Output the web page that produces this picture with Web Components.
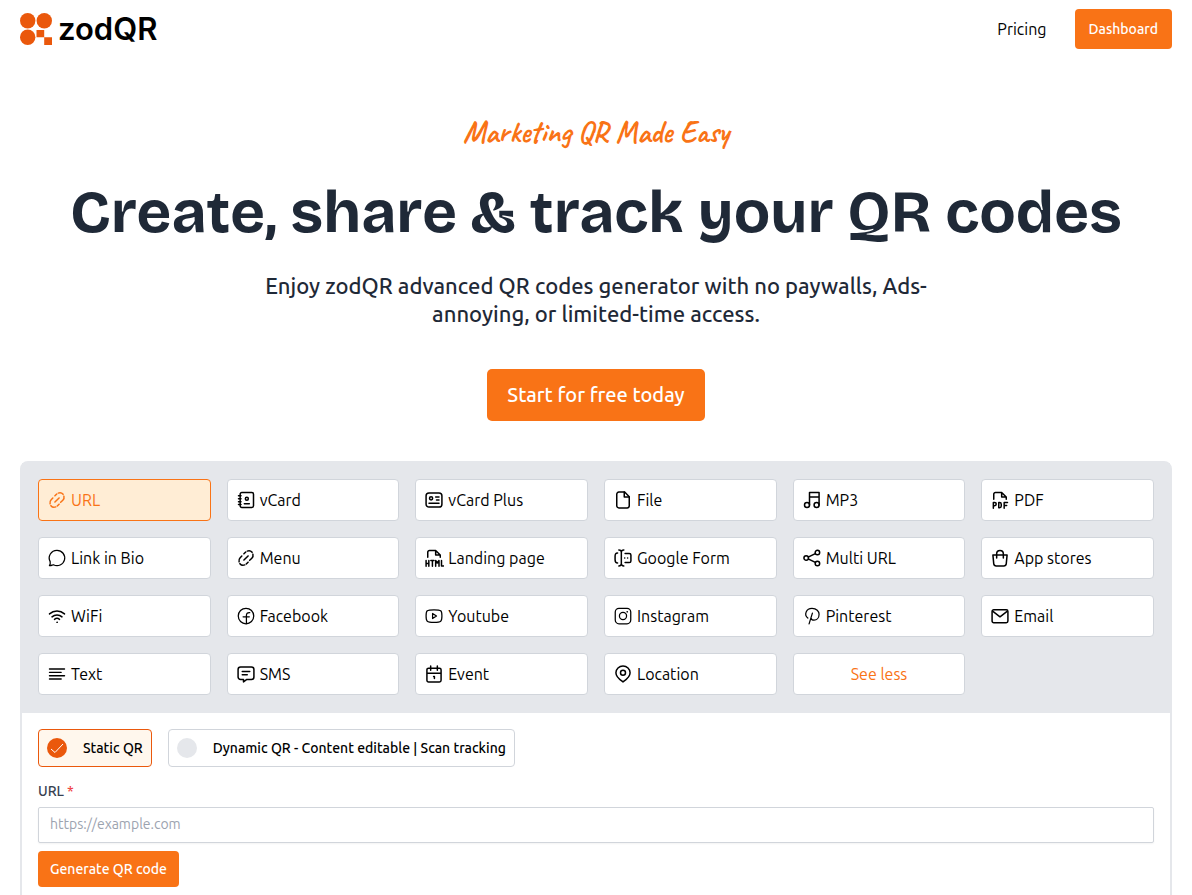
<!DOCTYPE html>
<html lang="en">
<head>
<meta charset="utf-8">
<meta name="viewport" content="width=device-width, initial-scale=1">
<title>zodQR - Marketing QR Made Easy</title>
<style>
  :root {
    --brand: #f97316;
    --brand-dark: #ea580c;
    --panel: #e5e7eb;
    --line: #d1d5db;
    --ink: #1f2937;
  }
  body {
    margin: 0;
    background: #fff;
    color: #000;
    font-family: Ubuntu, "Noto Sans", sans-serif;
    font-size: 16px;
    line-height: 24px;
  }
</style>
</head>
<body>
<site-header></site-header>
<main>
  <hero-section>
    <span slot="tagline">Marketing QR Made Easy</span>
    Create, share &amp; track your QR codes
    <span slot="lead">Enjoy zodQR advanced QR codes generator with no paywalls, Ads-annoying, or limited-time access.</span>
    <span slot="cta">Start for free today</span>
  </hero-section>
  <qr-generator></qr-generator>
</main>

<script>
const base = `
  * {
    margin: 0;
    padding: 0;
    box-sizing: border-box;
  }
  button, input {
    font: inherit;
  }
`

// all icons are drawn on a 24x24 grid
const icons = {
  link: `<path d="M9.500 7l2.200-2.200M13.500 3.700a5 5 0 0 1 5.800 1.500M20.300 7.500a5 5 0 0 1-1.300 4.800l-2.600 2.500M14.500 17l-2.200 2.200M10.500 20.300a5 5 0 0 1-5.800-1.500M3.700 16.500a5 5 0 0 1 1.300-4.800l2-2M9.500 14.500l5-5"/>`,
  chat: `<path stroke-width="1.5" d="M12 2.8a9.2 9.2 0 1 1-4.3 17.3c-1.2.1-2.7 1.3-4.8 1c1.1-1.4 1.2-3.2.9-4.7A9.2 9.2 0 0 1 12 2.8z"/>`,
  vcard: `<rect x="5" y="3" width="16" height="18" rx="2"/><path d="M3 7h3M3 10.500h3M3 14h3M3 17.500h3M10 16.500h6"/><circle cx="13" cy="10.500" r="1.800"/>`,
  vcardPlus: `<rect x="2.5" y="3.5" width="19" height="17" rx="3.5"/><circle cx="8.5" cy="10" r="1.9"/><path d="M14 8.5h4M15 12h3M6 16h12"/>`,
  file: `<path d="M14 2.5H7a2.5 2.5 0 0 0-2.5 2.5v14A2.5 2.5 0 0 0 7 21.500h10a2.500 2.500 0 0 0 2.500-2.500V8z"/><path d="M13.500 2.500V8.500h6"/>`,
  music: `<circle cx="6" cy="18" r="3"/><circle cx="17.500" cy="18" r="3"/><path d="M9 18V3h11.500v15M9 8.500h11.500"/>`,
  pdf: `<path d="M4.500 11V5a2 2 0 0 1 2-2H14l5.500 5.500V11M14 3v5.500h5.500"/><path stroke-width="1.800" d="M4 22v-7h1.600a1.900 1.900 0 0 1 0 3.800H4M10.500 15v6.200h1a2 2 0 0 0 2-2V17a2 2 0 0 0-2-2zM17 22v-7h4M17 18.500h3"/>`,
  html: `<path d="M4.500 11V5a2 2 0 0 1 2-2H14l5.500 5.500V11M14 3v5.500h5.500"/><path stroke-width="1.800" d="M2.500 15v7M5.800 15v7M2.500 18.500h3.300M8.200 15h3.800M10.100 15v7M14 22v-7l2 3 2-3v7M21 15v6.500h2.500"/>`,
  form: `<path d="M7 2.500c2.300 0 3 1 3 2.500v14c0 1.500-.7 2.500-3 2.500M13 2.500c-2.300 0-3 1-3 2.500M10 19c0 1.500.7 2.500 3 2.500M5.500 6C3.200 6 2.500 7.500 2.500 10v4c0 2.500.7 4 3 4M14.500 6.500h5a2 2 0 0 1 2 2v7a2 2 0 0 1-2 2h-5"/><path d="M14 12h.1M17.500 12h.1"/>`,
  share: `<circle cx="5" cy="12" r="2.700"/><circle cx="18.500" cy="5.500" r="2.700"/><circle cx="18.500" cy="18.500" r="2.700"/><path d="M8 10.700l8-4M8 13.300l8 4"/>`,
  bag: `<path d="M3.500 8.500h17l-1 10.500a3 3 0 0 1-3 2.500h-9a3 3 0 0 1-3-2.500z"/><path d="M8 12V7a4 4 0 0 1 8 0v5"/>`,
  wifi: `<path d="M3 9.500a13.500 13.500 0 0 1 18 0M6 13a9 9 0 0 1 12 0M9 16a4.800 4.800 0 0 1 6 0"/><circle cx="12" cy="19.500" r=".5" stroke-width="1"/>`,
  facebook: `<g stroke-width="1.500"><circle cx="12" cy="12" r="9.300"/><path d="M12.500 21v-9.500c0-2.500 1-3.700 4-3.500M8.500 13h7.500"/></g>`,
  youtube: `<g stroke-width="1.500"><path d="M2.500 12c0-6.500.6-7.500 9.500-7.500s9.500 1 9.500 7.500-.6 7.500-9.500 7.500-9.500-1-9.500-7.500z"/><path d="M10.300 9v6l4.700-3z"/></g>`,
  instagram: `<g stroke-width="1.500"><rect x="2.700" y="2.700" width="18.600" height="18.600" rx="4.500"/><circle cx="12" cy="12" r="4.300"/><path d="M17 7h.1" stroke-width="2"/></g>`,
  pinterest: `<g stroke-width="1.500"><path d="M7 14.500C2 10.500 5 2.800 12 2.800c5.500 0 8.500 3.500 8.500 7.200 0 4.500-3 7-6 7-2 0-3.300-1-3.600-2.500M12.500 8.500L8.500 21.500"/></g>`,
  mail: `<rect x="2.500" y="4.500" width="19" height="15.500" rx="2"/><path d="M3.500 6.500l8.500 6.500 8.500-6.500"/>`,
  text: `<path stroke-width="1.700" d="M3 6h18M3 10h14M3 14h18M3 18h14"/>`,
  sms: `<path d="M5.500 3.500h13a3 3 0 0 1 3 3v9a3 3 0 0 1-3 3H13l-4 3v-3H5.500a3 3 0 0 1-3-3v-9a3 3 0 0 1 3-3zM7.500 9h9M7.500 13h6"/>`,
  event: `<path d="M5.500 5h13a2 2 0 0 1 2 2v12.500a2 2 0 0 1-2 2h-13a2 2 0 0 1-2-2V7a2 2 0 0 1 2-2zM3.500 11h17M8 2.500v5M16 2.500v5M11.500 15h1v2.500"/>`,
  pin: `<path d="M12 21.500c-2-1.500-8.500-5.500-8.500-11a8.500 8 0 0 1 17 0c0 5.500-6.500 9.500-8.500 11z"/><circle cx="12" cy="10.500" r="3"/>`
}

class QrIcon extends HTMLElement {
  connectedCallback() {
    this.attachShadow({mode: "open"}).innerHTML = `
    <style>
      :host {
        display: block;
        flex: none;
        width: 20px;
        height: 20px;
      }
      svg {
        display: block;
        width: 100%;
        height: 100%;
        fill: none;
        stroke: currentColor;
        stroke-width: 1.8;
        stroke-linecap: round;
        stroke-linejoin: round;
      }
    </style>
    <svg viewBox="0 0 24 24" aria-hidden="true">${icons[this.getAttribute("name")]}</svg>
    `
  }
}

class ZodLogo extends HTMLElement {
  connectedCallback() {
    this.attachShadow({mode: "open"}).innerHTML = `
    <style>
      ${base}
      :host {
        display: block;
      }
      a {
        display: flex;
        align-items: center;
        gap: 6px;
        color: #000;
        text-decoration: none;
        font: 600 31px/32px Inter, sans-serif;
      }
      svg {
        width: 32px;
        height: 32px;
        fill: var(--brand-dark);
      }
    </style>
    <a href="#">
      <svg viewBox="0 0 32 32" aria-hidden="true">
        <circle cx="7.700" cy="7.700" r="7.700"/>
        <circle cx="24.300" cy="7.700" r="7.700"/>
        <circle cx="7.700" cy="24.300" r="7.700"/>
        <path d="M16.500 17h7.700v7.300h-7.700zM24.200 24.300H32V32h-7.800z"/>
      </svg>
      <span>zodQR</span>
    </a>
    `
  }
}

class SiteHeader extends HTMLElement {
  connectedCallback() {
    this.attachShadow({mode: "open"}).innerHTML = `
    <style>
      ${base}
      :host {
        display: block;
      }
      header {
        display: flex;
        align-items: center;
        justify-content: space-between;
        padding: 9px 20px;
      }
      nav {
        display: flex;
        align-items: center;
        gap: 28px;
      }
      nav a {
        color: #000;
        text-decoration: none;
      }
      nav .dashboard {
        padding: 8px 14px;
        border-radius: 4px;
        background: var(--brand);
        color: #fff;
        font-size: 14px;
        font-weight: 500;
      }
    </style>
    <header>
      <zod-logo></zod-logo>
      <nav>
        <a href="#pricing">Pricing</a>
        <a class="dashboard" href="#dashboard">Dashboard</a>
      </nav>
    </header>
    `
  }
}

class HeroSection extends HTMLElement {
  connectedCallback() {
    this.attachShadow({mode: "open"}).innerHTML = `
    <style>
      ${base}
      :host {
        display: block;
      }
      section {
        display: flex;
        flex-direction: column;
        align-items: center;
        padding: 56px 20px 40px;
        text-align: center;
        color: var(--ink);
      }
      .tagline {
        color: var(--brand);
        font: 700 30px/36px Caveat, cursive;
      }
      h1 {
        margin-top: 32px;
        font: 700 60px/60px "Bricolage Grotesque", Inter, sans-serif;
      }
      .lead {
        max-width: 672px;
        margin-top: 30px;
        font-size: 22px;
        font-weight: 500;
        line-height: 28px;
      }
      a {
        margin-top: 41px;
        padding: 12px 20px;
        border-radius: 5px;
        background: var(--brand);
        color: #fff;
        font-size: 20px;
        font-weight: 500;
        line-height: 28px;
        text-decoration: none;
      }
    </style>
    <section>
      <p class="tagline"><slot name="tagline"></slot></p>
      <h1><slot></slot></h1>
      <p class="lead"><slot name="lead"></slot></p>
      <a href="#start"><slot name="cta"></slot></a>
    </section>
    `
  }
}

class TypeTile extends HTMLElement {
  connectedCallback() {
    const icon = this.getAttribute("icon")
    this.attachShadow({mode: "open"}).innerHTML = `
    <style>
      ${base}
      :host {
        display: block;
      }
      button {
        display: flex;
        align-items: center;
        gap: 4px;
        width: 100%;
        height: 42px;
        padding: 0 8px;
        border: 1px solid var(--line);
        border-radius: 4px;
        background: #fff;
        color: #000;
        cursor: pointer;
      }
      :host([selected]) button {
        border-color: var(--brand);
        background: #ffedd5;
        color: var(--brand);
      }
      :host([more]) button {
        justify-content: center;
        color: var(--brand);
      }
    </style>
    <button type="button">
      ${icon ? `<qr-icon name="${icon}"></qr-icon>` : ""}
      <span><slot></slot></span>
    </button>
    `
  }
}

const types = [
  ["link", "URL"], ["vcard", "vCard"], ["vcardPlus", "vCard Plus"],
  ["file", "File"], ["music", "MP3"], ["pdf", "PDF"],
  ["chat", "Link in Bio"], ["link", "Menu"], ["html", "Landing page"],
  ["form", "Google Form"], ["share", "Multi URL"], ["bag", "App stores"],
  ["wifi", "WiFi"], ["facebook", "Facebook"], ["youtube", "Youtube"],
  ["instagram", "Instagram"], ["pinterest", "Pinterest"], ["mail", "Email"],
  ["text", "Text"], ["sms", "SMS"], ["event", "Event"], ["pin", "Location"]
]

class QrGenerator extends HTMLElement {
  connectedCallback() {
    this.attachShadow({mode: "open"}).innerHTML = `
    <style>
      ${base}
      :host {
        display: block;
        margin: 0 20px;
        border: 2px solid var(--panel);
        border-radius: 8px;
      }
      .types {
        display: grid;
        grid-template-columns: repeat(6, 1fr);
        gap: 16px;
        padding: 16px 16px 18px;
        background: var(--panel);
      }
    </style>
    <div class="types">
      ${types.map(([icon, label], i) => `<type-tile icon="${icon}"${i === 0 ? " selected" : ""}>${label}</type-tile>`).join("")}
      <type-tile more>See less</type-tile>
    </div>
    <qr-form></qr-form>
    `
  }
}

class QrForm extends HTMLElement {
  connectedCallback() {
    this.attachShadow({mode: "open"}).innerHTML = `
    <style>
      ${base}
      :host {
        display: block;
        font-size: 14px;
      }
      form {
        display: flex;
        flex-direction: column;
        align-items: flex-start;
        padding: 16px;
      }
      .modes {
        display: flex;
        gap: 16px;
        margin-bottom: 14px;
      }
      .modes label {
        display: flex;
        align-items: center;
        gap: 16px;
        height: 38px;
        padding: 0 8px;
        border: 1px solid var(--line);
        border-radius: 4px;
        font-weight: 500;
      }
      .modes label:has(:checked) {
        border-color: var(--brand-dark);
        background: #fff7ed;
      }
      .mark {
        display: grid;
      }
      .mark > * {
        grid-area: 1 / 1;
        width: 20px;
        height: 20px;
      }
      .mark input {
        appearance: none;
        border-radius: 50%;
        background: var(--panel);
      }
      .mark input:checked {
        background: var(--brand-dark);
      }
      .mark svg {
        display: none;
        fill: none;
        stroke: #fff;
        pointer-events: none;
      }
      .mark input:checked + svg {
        display: block;
      }
      .field {
        display: flex;
        gap: 3px;
        margin-bottom: 6px;
        color: #374151;
        font-weight: 500;
        line-height: 20px;
      }
      .field span {
        color: #ef4444;
      }
      .url {
        width: 100%;
        height: 36px;
        padding: 0 11px 2px;
        border: 1px solid var(--line);
        border-radius: 2px;
        background: #fff;
        box-shadow: 0 1px 2px rgba(0, 0, 0, 0.05);
      }
      .url::placeholder {
        color: #9ca3af;
      }
      button {
        height: 36px;
        margin-top: 8px;
        padding: 0 12px;
        border: 0;
        border-radius: 4px;
        background: var(--brand);
        color: #fff;
        font-weight: 500;
      }
    </style>
    <form>
      <div class="modes">
        ${this.mode("static", "Static QR", true)}
        ${this.mode("dynamic", "Dynamic QR - Content editable | Scan tracking", false)}
      </div>
      <label class="field" for="url">URL <span>*</span></label>
      <input class="url" id="url" type="url" placeholder="https://example.com" required>
      <button type="submit">Generate QR code</button>
    </form>
    `
  }

  mode(value, label, checked) {
    return `
    <label>
      <span class="mark">
        <input type="radio" name="mode" value="${value}"${checked ? " checked" : ""}>
        <svg viewBox="0 0 20 20" aria-hidden="true"><path d="M4 11l4 3.500 8-8.500"/></svg>
      </span>
      ${label}
    </label>`
  }
}

customElements.define("qr-icon", QrIcon)
customElements.define("zod-logo", ZodLogo)
customElements.define("site-header", SiteHeader)
customElements.define("hero-section", HeroSection)
customElements.define("type-tile", TypeTile)
customElements.define("qr-form", QrForm)
customElements.define("qr-generator", QrGenerator)
</script>
</body>
</html>
